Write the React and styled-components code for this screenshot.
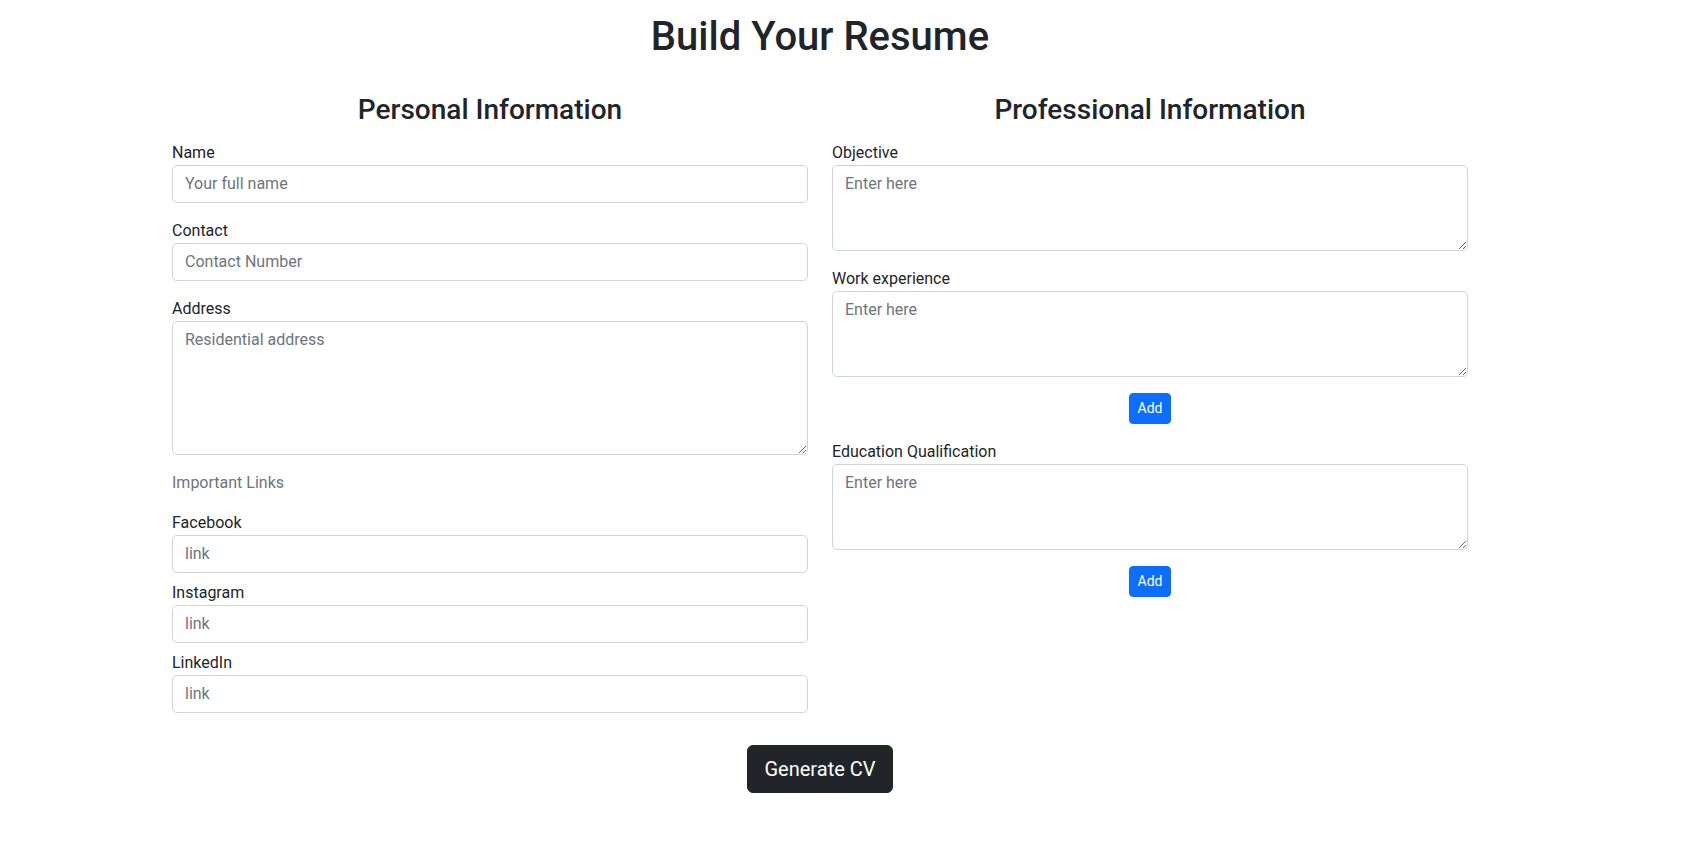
import React from 'react';
import styled, { createGlobalStyle } from 'styled-components';

// Global -->

const GlobalStyle = createGlobalStyle`
  * {
    box-sizing: border-box;
  }

  body {
    margin: 0;
    background: #fff;
    color: #212529;
    font-family: Roboto, "Liberation Sans", Arial, sans-serif;
    font-size: 16px;
    font-weight: 400;
    line-height: 1.5;
  }
`;

// Styled Components -->

const Page = styled.div`
  width: 1640px;
`;

const Title = styled.h1`
  margin: 13px 0 32px 0;
  text-align: center;
  font-size: 40px;
  font-weight: 500;
  line-height: 1.2;
`;

const Container = styled.div`
  max-width: 1320px;
  margin: 0 auto;
  padding: 0 12px;
`;

const Row = styled.div`
  display: grid;
  grid-template-columns: 1fr 1fr;
  column-gap: 24px;
`;

const Column = styled.section`
  display: flex;
  flex-direction: column;
`;

const SectionTitle = styled.h3`
  margin: 0 0 14px 0;
  text-align: center;
  font-size: 28px;
  font-weight: 500;
  line-height: 1.2;
`;

const Field = styled.div`
  display: flex;
  flex-direction: column;
  margin-bottom: ${props => (props.tight ? '8px' : '16px')};
`;

const Label = styled.label`
  font-size: 16px;
  line-height: 24px;
`;

const Muted = styled.p`
  margin: 0 0 16px 0;
  color: #6c757d;
`;

const Input = styled.input`
  display: block;
  width: 100%;
  height: 38px;
  padding: 6px 12px;
  border: 1px solid #ced4da;
  border-radius: 5px;
  background: #fff;
  color: #212529;
  font-family: inherit;
  font-size: 16px;
  line-height: 24px;

  &::placeholder {
    color: #6c757d;
  }
`;

const TextArea = styled.textarea`
  display: block;
  width: 100%;
  height: ${props => props.rows * 24 + 14}px;
  padding: 6px 12px;
  border: 1px solid #ced4da;
  border-radius: 5px;
  background: #fff;
  color: #212529;
  font-family: inherit;
  font-size: 16px;
  line-height: 24px;
  resize: vertical;

  &::placeholder {
    color: #6c757d;
  }
`;

const AddWrap = styled.div`
  display: flex;
  justify-content: center;
  margin-bottom: 16px;
`;

const AddButton = styled.button`
  height: 31px;
  padding: 4px 8px;
  border: 1px solid #0d6efd;
  border-radius: 4px;
  background: #0d6efd;
  color: #fff;
  font-family: inherit;
  font-size: 14px;
  line-height: 21px;
  cursor: pointer;
`;

const Footer = styled.div`
  display: flex;
  justify-content: center;
  margin-top: 24px;
`;

const GenerateButton = styled.button`
  height: 48px;
  padding: 8px 16px;
  border: 1px solid #212529;
  border-radius: 6px;
  background: #212529;
  color: #fff;
  font-family: inherit;
  font-size: 20px;
  line-height: 30px;
  cursor: pointer;
`;

// App Component -->

const links = ['Facebook', 'Instagram', 'LinkedIn'];

const App = () => {
  return (
    <Page>
      <GlobalStyle />
      <Title>Build Your Resume</Title>
      <Container>
        <Row>
          <Column>
            <SectionTitle>Personal Information</SectionTitle>
            <Field>
              <Label>Name</Label>
              <Input type="text" placeholder="Your full name" />
            </Field>
            <Field>
              <Label>Contact</Label>
              <Input type="text" placeholder="Contact Number" />
            </Field>
            <Field>
              <Label>Address</Label>
              <TextArea rows={5} placeholder="Residential address" />
            </Field>
            <Muted>Important Links</Muted>
            {links.map(name => (
              <Field tight key={name}>
                <Label>{name}</Label>
                <Input type="text" placeholder="link" />
              </Field>
            ))}
          </Column>
          <Column>
            <SectionTitle>Professional Information</SectionTitle>
            <Field>
              <Label>Objective</Label>
              <TextArea rows={3} placeholder="Enter here" />
            </Field>
            <Field>
              <Label>Work experience</Label>
              <TextArea rows={3} placeholder="Enter here" />
            </Field>
            <AddWrap>
              <AddButton type="button">Add</AddButton>
            </AddWrap>
            <Field>
              <Label>Education Qualification</Label>
              <TextArea rows={3} placeholder="Enter here" />
            </Field>
            <AddWrap>
              <AddButton type="button">Add</AddButton>
            </AddWrap>
          </Column>
        </Row>
        <Footer>
          <GenerateButton type="button">Generate CV</GenerateButton>
        </Footer>
      </Container>
    </Page>
  );
};

export default App;
